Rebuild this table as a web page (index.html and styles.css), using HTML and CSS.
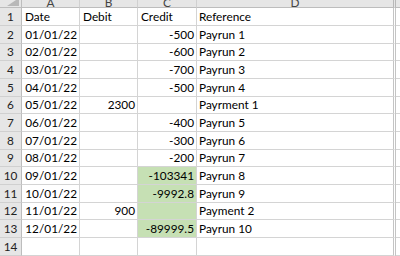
FILE: index.html
```html
<!DOCTYPE html>
<html>
<head>
<meta charset="utf-8">
<link rel="stylesheet" href="styles.css">
</head>
<body>
<div class="sheet">
  <div class="corner"><svg class="tri" width="12" height="8" viewBox="0 0 12 8"><polygon points="12,0 12,8 0,8" fill="#b8b8b8"/></svg></div>
  <div class="ch"><span>A</span></div>
  <div class="ch"><span>B</span></div>
  <div class="ch"><span>C</span></div>
  <div class="ch d"><span>D</span></div>
  <div class="ch e"></div>

  <div class="rh">1</div><div class="c">Date</div><div class="c">Debit</div><div class="c">Credit</div><div class="c d">Reference</div><div class="c e"></div>
  <div class="rh">2</div><div class="c r">01/01/22</div><div class="c"></div><div class="c r">-500</div><div class="c d">Payrun 1</div><div class="c e"></div>
  <div class="rh">3</div><div class="c r">02/01/22</div><div class="c"></div><div class="c r">-600</div><div class="c d">Payrun 2</div><div class="c e"></div>
  <div class="rh">4</div><div class="c r">03/01/22</div><div class="c"></div><div class="c r">-700</div><div class="c d">Payrun 3</div><div class="c e"></div>
  <div class="rh">5</div><div class="c r">04/01/22</div><div class="c"></div><div class="c r">-500</div><div class="c d">Payrun 4</div><div class="c e"></div>
  <div class="rh">6</div><div class="c r">05/01/22</div><div class="c r">2300</div><div class="c"></div><div class="c d">Payrment 1</div><div class="c e"></div>
  <div class="rh">7</div><div class="c r">06/01/22</div><div class="c"></div><div class="c r">-400</div><div class="c d">Payrun 5</div><div class="c e"></div>
  <div class="rh">8</div><div class="c r">07/01/22</div><div class="c"></div><div class="c r">-300</div><div class="c d">Payrun 6</div><div class="c e"></div>
  <div class="rh">9</div><div class="c r">08/01/22</div><div class="c"></div><div class="c r">-200</div><div class="c d">Payrun 7</div><div class="c e"></div>
  <div class="rh">10</div><div class="c r">09/01/22</div><div class="c"></div><div class="c r g">-103341</div><div class="c d">Payrun 8</div><div class="c e"></div>
  <div class="rh">11</div><div class="c r">10/01/22</div><div class="c"></div><div class="c r g">-9992.8</div><div class="c d">Payrun 9</div><div class="c e"></div>
  <div class="rh">12</div><div class="c r">11/01/22</div><div class="c r">900</div><div class="c g"></div><div class="c d">Payment 2</div><div class="c e"></div>
  <div class="rh">13</div><div class="c r">12/01/22</div><div class="c"></div><div class="c r g">-89999.5</div><div class="c d">Payrun 10</div><div class="c e"></div>
  <div class="rh">14</div><div class="c"></div><div class="c"></div><div class="c"></div><div class="c d"></div><div class="c e"></div>
</div>
</body>
</html>
```
FILE: styles.css
```css
html, body {
  margin: 0;
  padding: 0;
  background: #ffffff;
}
body {
  width: 400px;
  height: 256px;
  overflow: hidden;
  font-family: "Lato", "Liberation Sans", sans-serif;
  font-size: 11.8px;
  color: #000;
}
.sheet {
  display: grid;
  grid-template-columns: 22px 58px 58px 59px 199px 1fr;
  grid-template-rows: 8.4px repeat(14, 17.67px);
  width: 400px;
}
.corner {
  background: #e6e6e6;
  border-right: 1px solid #bdbdbd;
  border-bottom: 1px solid #bdbdbd;
  display: flex;
  justify-content: flex-end;
  align-items: flex-end;
  overflow: hidden;
  padding: 0 2px 1px 0;
}
.tri { display: block; }
.ch {
  background: #e6e6e6;
  border-right: 1px solid #d0d0d0;
  border-bottom: 1px solid #bdbdbd;
  display: flex;
  justify-content: center;
  align-items: flex-end;
  overflow: hidden;
  color: #444;
}
.ch span {
  line-height: 10px;
  margin-bottom: -1px;
}
.ch.d { border-right: 3px double #b8b8b8; }
.ch.e { border-right: none; }
.rh {
  background: #e6e6e6;
  border-right: 1px solid #bdbdbd;
  border-bottom: 1px solid #d0d0d0;
  display: flex;
  justify-content: center;
  align-items: flex-end;
  padding-bottom: 1px;
  line-height: 14px;
  color: #222;
}
.c {
  border-right: 1px solid #d4d4d4;
  border-bottom: 1px solid #d4d4d4;
  display: flex;
  align-items: flex-end;
  padding: 0 2px 1px 3px;
  line-height: 14px;
  white-space: nowrap;
  overflow: hidden;
}
.c.r { justify-content: flex-end; padding-right: 2px; }
.c.d { border-right: 3px double #c4c4c4; padding-left: 2px; }
.c.e { border-right: none; }
.g { background: #c6e0b4; }
```
